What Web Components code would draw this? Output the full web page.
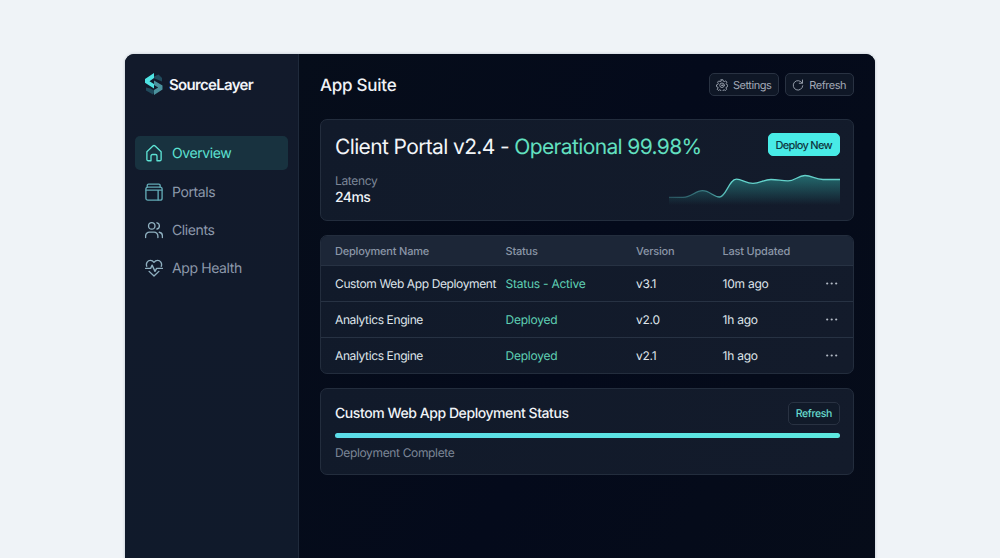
<!DOCTYPE html>
<html lang="en">
<head>
  <meta charset="UTF-8">
  <title>SourceLayer</title>
  <style>
    html, body {
      margin: 0;
      height: 100%;
      overflow: hidden;
    }

    body {
      background: #eff3f7;
      font-family: Inter, "Liberation Sans", sans-serif;
      text-rendering: geometricPrecision;
    }
  </style>
</head>
<body>
  <app-window>
    <app-sidebar slot="sidebar">
      <nav-item icon="home" active>Overview</nav-item>
      <nav-item icon="portals">Portals</nav-item>
      <nav-item icon="clients">Clients</nav-item>
      <nav-item icon="health">App Health</nav-item>
    </app-sidebar>

    <app-header heading="App Suite">
      <app-button icon="settings">Settings</app-button>
      <app-button icon="refresh">Refresh</app-button>
    </app-header>

    <portal-card name="Client Portal v2.4" status="Operational 99.98%" latency="24ms">
      <app-button slot="action" variant="primary">Deploy New</app-button>
    </portal-card>

    <deployment-table>
      <deployment-row name="Custom Web App Deployment" status="Status - Active" version="v3.1" updated="10m ago"></deployment-row>
      <deployment-row name="Analytics Engine" status="Deployed" version="v2.0" updated="1h ago"></deployment-row>
      <deployment-row name="Analytics Engine" status="Deployed" version="v2.1" updated="1h ago"></deployment-row>
    </deployment-table>

    <status-card heading="Custom Web App Deployment Status" message="Deployment Complete" progress="100">
      <app-button slot="action" variant="accent">Refresh</app-button>
    </status-card>
  </app-window>

  <script>
    const ICONS = {
      home: '<path d="M2.500 10.200 10.500 2.800a2.200 2.200 0 0 1 3 0L21.500 10.200V20.500a1.800 1.800 0 0 1-1.800 1.800H16V16a2 2 0 0 0-2-2h-4a2 2 0 0 0-2 2v6.300H4.300a1.800 1.800 0 0 1-1.800-1.800z"/>',
      portals: '<path d="M3 5.500V3.200A1.700 1.700 0 0 1 4.700 1.500H18.500A1.700 1.700 0 0 1 20.200 3.200V5.500"/><rect x="1.200" y="5.500" width="21.600" height="17.300" rx="2.600"/><path d="M1.500 9.500h21M17.500 9.500v13"/>',
      clients: '<circle cx="9" cy="6.500" r="4.300"/><path d="M.8 22v-2a5.200 5.200 0 0 1 5.200-5.200h6a5.200 5.200 0 0 1 5.200 5.200v2M16 2.400a4.300 4.300 0 0 1 0 8.300M19 15a5 5 0 0 1 4.200 4.800v2.200"/>',
      health: '<path d="M2.300 9.800C.8 5.200 3.800 1.800 7.200 1.800c2.200 0 3.700 1 4.800 2.600 1.100-1.600 2.600-2.600 4.800-2.600 3.400 0 6.400 3.400 4.900 8M.8 12.500h6.700l2-4.300 3.800 8.300 2.200-4h7.700M5.500 16.500l6.500 6.300 6.500-6.300"/>',
      settings: '<path d="M10.200 1.500h3.600l.8 2.900 2 .9 2.700-1.500 2.500 2.600-1.500 2.700.8 1.900 2.400.9v3.200l-2.700.9-.8 2 1.300 2.600-2.500 2.400-2.500-1.400-2 .8-.9 2.600h-3.200l-.9-2.700-2-.8-2.600 1.400-2.500-2.500L4.300 18l-.8-2-2.500-.8v-3.400l2.700-.9.8-2L3.100 6.300l2.500-2.500 2.600 1.500 1.900-.9z"/><circle cx="12" cy="12.500" r="4.500"/><circle cx="12" cy="12.500" r=".8"/>',
      refresh: '<path d="M20.300 8A9.500 9.500 0 1 0 21.500 13.500M21 2v6.500h-6.500"/>'
    };

    function icon(name, size, stroke) {
      return `<svg class="icon" width="${size}" height="${size}" viewBox="0 0 24 24" fill="none" stroke="currentColor" stroke-width="${stroke}" stroke-linecap="round" stroke-linejoin="round">${ICONS[name]}</svg>`;
    }

    const cardStyles = `
      :host {
        display: block;
        box-sizing: border-box;
        background: linear-gradient(120deg, #111a2a, #131b2b);
        border: 1px solid #232d3d;
        border-radius: 7px;
      }
    `;

    class AppWindow extends HTMLElement {
      constructor() {
        super();
        this.attachShadow({ mode: 'open' });
      }

      connectedCallback() {
        this.shadowRoot.innerHTML = `
          <style>
            :host {
              display: grid;
              grid-template-columns: 174px 1fr;
              width: 750px;
              height: 520px;
              margin: 54px auto 0;
              background: #050b1a;
              border-radius: 9px 9px 0 0;
              overflow: hidden;
              box-shadow: 0 0 3px rgba(30, 50, 80, 0.25);
            }

            main {
              display: flex;
              flex-direction: column;
              padding: 0 21px;
              background: linear-gradient(115deg, #060d1a, #040a1b 50%, #060c19);
            }
          </style>
          <slot name="sidebar"></slot>
          <main><slot></slot></main>
        `;
      }
    }

    class AppSidebar extends HTMLElement {
      constructor() {
        super();
        this.attachShadow({ mode: 'open' });
      }

      connectedCallback() {
        this.shadowRoot.innerHTML = `
          <style>
            :host {
              display: block;
              box-sizing: border-box;
              padding: 0 10px;
              background: linear-gradient(#121a2b, #101a2b);
              border-right: 1px solid #1f2a3b;
            }

            .brand {
              display: flex;
              align-items: center;
              gap: 6px;
              height: 60px;
              margin-bottom: 22px;
              padding-left: 10px;
              color: #f2f5f9;
              font-size: 15px;
              font-weight: 600;
              letter-spacing: -0.68px;
            }

            nav {
              display: flex;
              flex-direction: column;
              gap: 4px;
            }
          </style>
          <div class="brand">
            <svg width="18" height="22" viewBox="0 0 18 22">
              <path d="M9 3.500 13.500 1.500 17 5v3.500L9 5.200z" fill="#1f4a5c"/>
              <path d="M1 14.500v3L8 21.500l2-3.500-4.500-2.500z" fill="#1f4a5c"/>
              <path d="M9 0v5L4.500 8.200 9 11v4.500L0 9.800V6z" fill="#4fe3e3"/>
              <path d="M9 7.500l8.500 5v4L9 22v-5l4.200-2.500L9 12z" fill="#4b929e"/>
            </svg>
            <span>SourceLayer</span>
          </div>
          <nav><slot></slot></nav>
        `;
      }
    }

    class NavItem extends HTMLElement {
      constructor() {
        super();
        this.attachShadow({ mode: 'open' });
      }

      connectedCallback() {
        this.shadowRoot.innerHTML = `
          <style>
            :host {
              display: flex;
              align-items: center;
              gap: 9px;
              box-sizing: border-box;
              height: 34.4px;
              padding-left: 10px;
              border-radius: 5px;
              color: #8c98aa;
              font-size: 14px;
              letter-spacing: -0.4px;
            }

            :host([active]) {
              background: #18323f;
              color: #5de2d3;
            }

            span {
              padding-top: 1px;
            }

            .icon {
              color: #8fb0c0;
            }

            :host([icon="portals"]) .icon {
              color: #62a9b5;
            }

            :host([active]) .icon {
              color: #5de2d3;
            }
          </style>
          ${icon(this.getAttribute('icon'), 18, 1.8)}
          <span><slot></slot></span>
        `;
      }
    }

    class AppHeader extends HTMLElement {
      constructor() {
        super();
        this.attachShadow({ mode: 'open' });
      }

      connectedCallback() {
        this.shadowRoot.innerHTML = `
          <style>
            :host {
              display: flex;
              align-items: center;
              justify-content: space-between;
              height: 61px;
              margin-bottom: 4px;
            }

            h1 {
              margin: 2px 0 0;
              color: #f0f3f7;
              font-size: 17px;
              font-weight: 500;
              letter-spacing: -0.25px;
            }

            .actions {
              display: flex;
              gap: 6px;
            }
          </style>
          <h1>${this.getAttribute('heading')}</h1>
          <div class="actions"><slot></slot></div>
        `;
      }
    }

    class AppButton extends HTMLElement {
      constructor() {
        super();
        this.attachShadow({ mode: 'open' });
      }

      connectedCallback() {
        const name = this.getAttribute('icon');

        this.shadowRoot.innerHTML = `
          <style>
            :host {
              display: block;
            }

            button {
              display: flex;
              align-items: center;
              gap: 5px;
              box-sizing: border-box;
              height: 23px;
              margin: 0;
              padding: 0 7px 0 6px;
              background: #0f1726;
              border: 1px solid #293242;
              border-radius: 5px;
              color: #a2a9b6;
              font: 400 11px Inter, "Liberation Sans", sans-serif;
              letter-spacing: -0.48px;
              text-rendering: inherit;
              white-space: nowrap;
            }

            :host([variant="primary"]) button {
              padding: 0 7px;
              background: #48ebe6;
              border-color: #48ebe6;
              color: #0d3540;
              font-weight: 500;
              letter-spacing: -0.7px;
            }

            :host([variant="accent"]) button {
              padding: 0 7px;
              background: #111a29;
              color: #68dccf;
              font-weight: 500;
              font-size: 10.500px;
              letter-spacing: -0.35px;
            }
          </style>
          <button type="button">
            ${name ? icon(name, 12, 1.8) : ''}
            <slot></slot>
          </button>
        `;
      }
    }

    class PortalCard extends HTMLElement {
      constructor() {
        super();
        this.attachShadow({ mode: 'open' });
      }

      connectedCallback() {
        const line = 'M0 27.300H14C23 27.300 26 20.700 33.500 20.700S44 27 50.500 27C57 27 60 9.200 67.500 9.200 73 9.200 77 13.300 84 13.300S95 9.500 102 9.500 112 10.900 119 10.900 129 5.500 136 5.500 146 9.500 154 9.500H171';

        this.shadowRoot.innerHTML = `
          <style>
            ${cardStyles}

            :host {
              height: 102px;
              padding: 13px 13px 0 14px;
            }

            .top, .bottom {
              display: flex;
              justify-content: space-between;
              height: 28px;
            }

            h2 {
              margin: 1px 0 0;
              color: #f3f5f8;
              font-size: 21px;
              font-weight: 400;
              letter-spacing: -0.63px;
              line-height: 28px;
              white-space: nowrap;
            }

            h2 span {
              color: #62e0c0;
            }

            .bottom {
              margin-top: 9px;
            }

            dl {
              margin: 2px 0 0;
            }

            dt {
              color: #7c8697;
              font-size: 12px;
              letter-spacing: -0.35px;
              line-height: 17px;
            }

            dd {
              margin: 0;
              color: #f0f3f7;
              font-size: 14px;
              font-weight: 500;
              letter-spacing: -0.6px;
              line-height: 17px;
            }
          </style>
          <div class="top">
            <h2>${this.getAttribute('name')} - <span>${this.getAttribute('status')}</span></h2>
            <slot name="action"></slot>
          </div>
          <div class="bottom">
            <dl>
              <dt>Latency</dt>
              <dd>${this.getAttribute('latency')}</dd>
            </dl>
            <svg width="171" height="37" viewBox="0 0 171 37">
              <defs>
                <linearGradient id="fill" x1="0" y1="0" x2="0" y2="1">
                  <stop offset="0.100" stop-color="#2b8c8b" stop-opacity="0.620"/>
                  <stop offset="1" stop-color="#2b8c8b" stop-opacity="0"/>
                </linearGradient>
                <linearGradient id="stroke" gradientUnits="userSpaceOnUse" x1="0" y1="0" x2="171" y2="0">
                  <stop offset="0" stop-color="#28515d"/>
                  <stop offset="0.240" stop-color="#3b8288"/>
                  <stop offset="0.360" stop-color="#64d5cd"/>
                  <stop offset="1" stop-color="#62cdc7"/>
                </linearGradient>
              </defs>
              <path d="${line}V35H0z" fill="url(#fill)"/>
              <path d="${line}" fill="none" stroke="url(#stroke)" stroke-width="1.300"/>
            </svg>
          </div>
        `;
      }
    }

    // Header and rows share the same column widths
    const columnStyles = `
      .row {
        display: grid;
        grid-template-columns: 170.500px 130.500px 86.500px 1fr 14px;
        align-items: center;
        padding: 0 14px;
        white-space: nowrap;
      }
    `;

    class DeploymentTable extends HTMLElement {
      constructor() {
        super();
        this.attachShadow({ mode: 'open' });
      }

      connectedCallback() {
        this.shadowRoot.innerHTML = `
          <style>
            ${cardStyles}
            ${columnStyles}

            :host {
              margin: 14px 0;
              overflow: hidden;
            }

            .row {
              height: 29px;
              background: #1c2637;
              color: #8b96a7;
              font-size: 11px;
              font-weight: 500;
              letter-spacing: -0.2px;
            }
          </style>
          <div class="row">
            <span>Deployment Name</span>
            <span>Status</span>
            <span>Version</span>
            <span>Last Updated</span>
          </div>
          <slot></slot>
        `;
      }
    }

    class DeploymentRow extends HTMLElement {
      constructor() {
        super();
        this.attachShadow({ mode: 'open' });
      }

      connectedCallback() {
        this.shadowRoot.innerHTML = `
          <style>
            ${columnStyles}

            :host {
              display: block;
              border-top: 1px solid #273243;
            }

            .row {
              height: 35px;
              color: #dfe4ea;
              font-size: 12px;
              letter-spacing: -0.24px;
            }

            .name {
              letter-spacing: -0.38px;
            }

            .status {
              color: #5fd0b4;
            }
          </style>
          <div class="row">
            <span class="name">${this.getAttribute('name')}</span>
            <span class="status">${this.getAttribute('status')}</span>
            <span>${this.getAttribute('version')}</span>
            <span>${this.getAttribute('updated')}</span>
            <svg width="14" height="4" viewBox="0 0 14 4" fill="#b3bac5">
              <circle cx="2.200" cy="1.500" r="1.100"/>
              <circle cx="6.700" cy="1.500" r="1.100"/>
              <circle cx="11.200" cy="1.500" r="1.100"/>
            </svg>
          </div>
        `;
      }
    }

    class StatusCard extends HTMLElement {
      constructor() {
        super();
        this.attachShadow({ mode: 'open' });
      }

      connectedCallback() {
        this.shadowRoot.innerHTML = `
          <style>
            ${cardStyles}

            :host {
              height: 87px;
              padding: 13px 13px 0 14px;
            }

            .top {
              display: flex;
              align-items: center;
              justify-content: space-between;
              height: 23px;
            }

            h3 {
              margin: 0;
              color: #f0f3f7;
              font-size: 14px;
              font-weight: 500;
              letter-spacing: -0.43px;
            }

            .track {
              height: 5px;
              margin: 8px 0 7px;
              border-radius: 3px;
              background: #1c2637;
            }

            .bar {
              width: ${this.getAttribute('progress')}%;
              height: 100%;
              border-radius: 3px;
              background: linear-gradient(90deg, #5bdce8, #5ce8df);
            }

            p {
              margin: 0;
              color: #7c8697;
              font-size: 12px;
              letter-spacing: -0.35px;
              line-height: 16px;
            }
          </style>
          <div class="top">
            <h3>${this.getAttribute('heading')}</h3>
            <slot name="action"></slot>
          </div>
          <div class="track"><div class="bar"></div></div>
          <p>${this.getAttribute('message')}</p>
        `;
      }
    }

    customElements.define('app-window', AppWindow);
    customElements.define('app-sidebar', AppSidebar);
    customElements.define('nav-item', NavItem);
    customElements.define('app-header', AppHeader);
    customElements.define('app-button', AppButton);
    customElements.define('portal-card', PortalCard);
    customElements.define('deployment-table', DeploymentTable);
    customElements.define('deployment-row', DeploymentRow);
    customElements.define('status-card', StatusCard);
  </script>
</body>
</html>
